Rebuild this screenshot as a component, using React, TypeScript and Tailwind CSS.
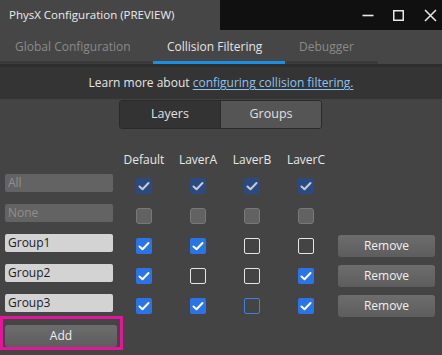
import React from "react";

const columns = ["Default", "LaverA", "LaverB", "LaverC"];

type Box = "locked" | "lockedOff" | "on" | "off" | "hover";

const rows: { name: string; fixed?: boolean; boxes: Box[] }[] = [
  { name: "All", fixed: true, boxes: ["locked", "locked", "locked", "locked"] },
  { name: "None", fixed: true, boxes: ["lockedOff", "lockedOff", "lockedOff", "lockedOff"] },
  { name: "Group1", boxes: ["on", "on", "off", "off"] },
  { name: "Group2", boxes: ["on", "off", "off", "on"] },
  { name: "Group3", boxes: ["on", "on", "hover", "on"] },
];

const Check = ({ color }: { color: string }) => (
  <svg width="16" height="16" viewBox="0 0 16 16">
    <polyline points="3.5,8.5 6.5,11.2 12.5,5" fill="none" stroke={color} strokeWidth="2" strokeLinecap="round" strokeLinejoin="round" />
  </svg>
);

const CheckBox = ({ kind }: { kind: Box }) => {
  if (kind === "locked")
    return (
      <div className="w-4 h-4 rounded-[2px] bg-[#2b4b80]">
        <Check color="#c4ccd8" />
      </div>
    );
  if (kind === "on")
    return (
      <div className="w-4 h-4 rounded-[2px] bg-[#2a74e8]">
        <Check color="#ffffff" />
      </div>
    );
  if (kind === "lockedOff")
    return <div className="w-4 h-4 rounded-[3px] bg-[#626262] border border-[#787878]" />;
  if (kind === "hover")
    return <div className="w-4 h-4 rounded-[2px] border border-[#3f80e0]" />;
  return <div className="w-4 h-4 rounded-[2px] border border-[#e6e6e6]" />;
};

const GreyButton = ({ label, className }: { label: string; className: string }) => (
  <button className={`h-[22px] rounded-[3px] bg-gradient-to-b from-[#6d6d6d] to-[#5d5d5d] text-[12px] text-[#efefef] leading-none ${className}`}>
    {label}
  </button>
);

export default function App() {
  return (
    <div className="w-[442px] h-[355px] overflow-hidden bg-[#444444] text-[#e2e2e2] font-['Open_Sans',sans-serif]">
      {/* title bar */}
      <div className="flex h-[30px]">
        <div className="w-[220px] bg-[#464646] pl-[9px] flex items-center text-[11.5px] text-[#ececec]">
          PhysX Configuration (PREVIEW)
        </div>
        <div className="flex-1 bg-[#101010] flex items-center">
          <svg width="12" height="12" viewBox="0 0 12 12" className="ml-[142px]">
            <line x1="0.5" y1="6.5" x2="11.5" y2="6.5" stroke="#e8e8e8" strokeWidth="1.6" />
          </svg>
          <svg width="11" height="11" viewBox="0 0 11 11" className="ml-[19px]">
            <rect x="0.75" y="0.75" width="9.5" height="9.5" fill="none" stroke="#e8e8e8" strokeWidth="1.5" />
          </svg>
          <svg width="13" height="13" viewBox="0 0 13 13" className="ml-[20px]">
            <path d="M1 1 L12 12 M12 1 L1 12" stroke="#e8e8e8" strokeWidth="1.5" />
          </svg>
        </div>
      </div>

      {/* tabs */}
      <div className="h-[34px] bg-[#464646] flex items-end">
        <div className="flex w-[378px] bg-[#3b3b3b] h-[3px]" />
      </div>
      <div className="flex -mt-[34px] h-[34px] text-[12px]">
        <div className="w-[153px] pl-[15px] flex items-center text-[#8a8a8a]">Global Configuration</div>
        <div className="w-[132px] pl-[14px] flex items-center text-[#e4e4e4] border-b-[3px] border-[#1a8fe3] pt-[3px]">
          Collision Filtering
        </div>
        <div className="w-[93px] pl-[14px] flex items-center text-[#8a8a8a]">Debugger</div>
      </div>

      {/* info bar */}
      <div className="h-[35px] border-t-[3px] border-[#2e2e2e] bg-[#343434] flex items-center justify-center text-[12px] text-[#e6e6e6]">
        Learn more about&nbsp;
        <a className="text-[#8cc4f2] underline underline-offset-2">configuring collision filtering.</a>
      </div>

      {/* segmented control */}
      <div className="flex ml-[119px] mt-px w-[203px] h-[29px] rounded-[3px] border border-[#2a2a2a] overflow-hidden text-[12.5px]">
        <div className="flex-1 bg-[#333333] flex items-center justify-center text-[#e0e0e0] border-r border-[#2a2a2a]">Layers</div>
        <div className="flex-1 bg-[#555555] flex items-center justify-center text-[#e0e0e0]">Groups</div>
      </div>

      {/* headers */}
      <div className="flex pl-[117px] pt-[22px] h-[41px] text-[12px] text-[#e8e8e8]">
        {columns.map((c) => (
          <div key={c} className="w-[54px] text-center leading-[18px]">
            {c}
          </div>
        ))}
      </div>

      {/* group rows */}
      {rows.map((r) => (
        <div key={r.name} className="flex h-[30px] items-start pl-[5px]">
          <div
            className={`w-[108px] h-[18px] mt-[4px] rounded-[2px] px-[3px] flex items-center text-[12px] ${
              r.fixed ? "bg-[#636363] text-[#8f8f8f]" : "bg-[#d3d3d3] text-[#1c1c1c]"
            }`}
          >
            {r.name}
          </div>
          <div className="flex ml-[4px] mt-[8px]">
            {r.boxes.map((b, i) => (
              <div key={i} className="w-[54px] flex justify-center">
                <CheckBox kind={b} />
              </div>
            ))}
          </div>
          {!r.fixed && <GreyButton label="Remove" className="w-[97px] ml-[5px] mt-[5px]" />}
        </div>
      ))}

      {/* add, with highlight frame */}
      <div className="w-[123px] h-[34px] -mt-[4px] border-[3px] border-[#e4159b] pl-[2px] pt-[3px]">
        <GreyButton label="Add" className="w-[112px]" />
      </div>
    </div>
  );
}
